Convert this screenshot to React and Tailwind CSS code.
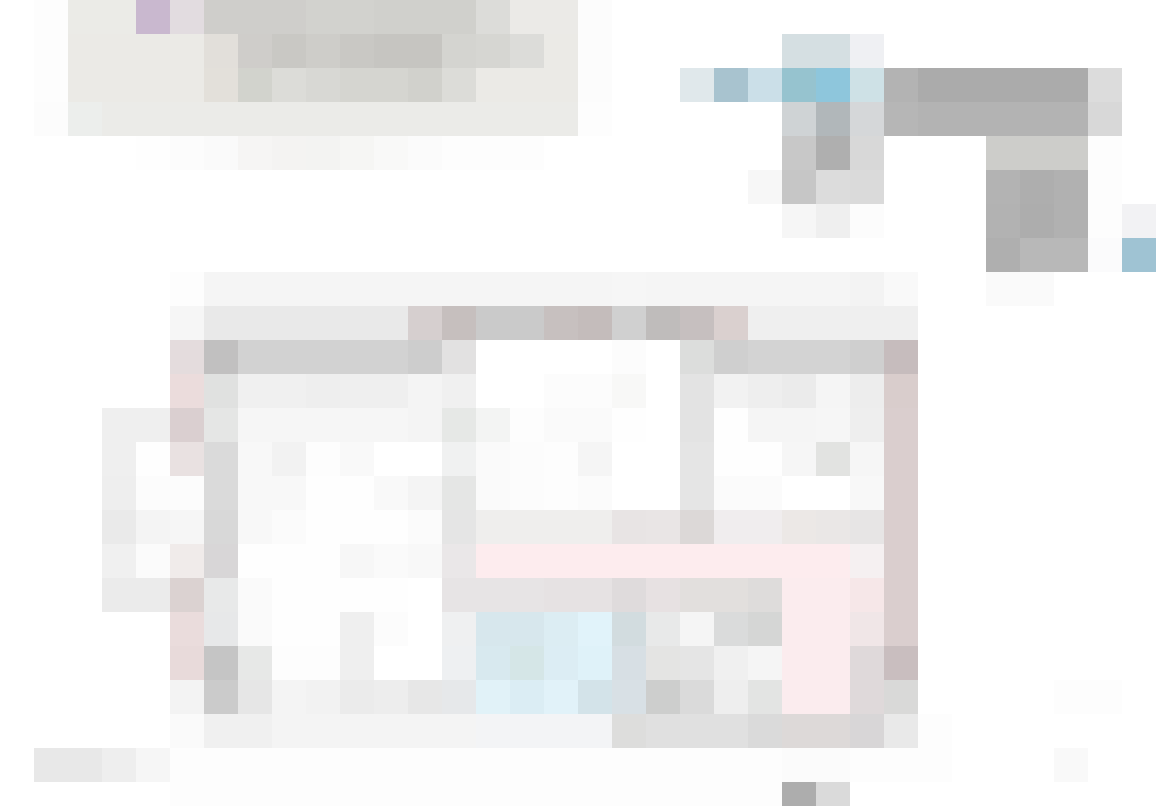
import React from 'react';

const CELL = 34;

// One entry per mosaic row, each run is [column, span, color]
const rows = [
  [[1, 1, '#fdfdfd'], [2, 2, '#ebebe7'], [4, 1, '#c9b8cf'], [5, 1, '#e2dce0'], [6, 3, '#cfcecb'], [9, 2, '#d2d2ce'], [11, 3, '#d0d0cc'], [14, 1, '#dcdcd9'], [15, 2, '#ebeae7'], [17, 1, '#fcfcfc']],
  [[1, 1, '#fdfdfd'], [2, 4, '#ebeae6'], [6, 1, '#e2dfda'], [7, 1, '#cfcdca'], [8, 1, '#c9c8c4'], [9, 1, '#cecdc9'], [10, 1, '#c9c8c4'], [11, 2, '#c6c5c1'], [13, 1, '#d4d4d0'], [14, 1, '#d6d6d2'], [15, 1, '#dcdcd9'], [16, 1, '#ebeae6'], [17, 1, '#fcfcfc'], [23, 2, '#d5dfe2'], [25, 1, '#eff0f3']],
  [[1, 1, '#fdfdfd'], [2, 4, '#ebeae6'], [6, 1, '#e3e0da'], [7, 1, '#d2d3cd'], [8, 1, '#dcdcd8'], [9, 1, '#d8d8d4'], [10, 2, '#d5d5d0'], [12, 1, '#d1d1cc'], [13, 1, '#dcdcd8'], [14, 3, '#ebeae6'], [17, 1, '#fcfcfc'], [20, 1, '#e0e8eb'], [21, 1, '#a8c3cf'], [22, 1, '#cbdfe8'], [23, 1, '#96c3cf'], [24, 1, '#8ec6dc'], [25, 1, '#cee1e6'], [26, 1, '#b3b3b3'], [27, 5, '#ababab'], [32, 1, '#dcdcdc']],
  [[1, 1, '#fcfcfc'], [2, 1, '#eceeec'], [3, 14, '#ebebe8'], [17, 1, '#fdfdfd'], [23, 1, '#cfd3d5'], [24, 1, '#b1b7ba'], [25, 1, '#d5d7d9'], [26, 1, '#b6b6b6'], [27, 5, '#b3b3b3'], [32, 1, '#d8d8d8']],
  [[4, 1, '#fefefe'], [5, 1, '#fcfcfc'], [6, 1, '#fafafa'], [7, 1, '#f6f5f4'], [8, 1, '#f4f3f2'], [9, 1, '#f3f3f2'], [10, 1, '#f6f6f4'], [11, 1, '#f9f9f8'], [12, 1, '#fbfbfb'], [13, 3, '#fdfdfd'], [23, 1, '#c8c8c8'], [24, 1, '#afafaf'], [25, 1, '#d8d8d8'], [29, 3, '#cdcdca'], [32, 1, '#fdfdfd']],
  [[22, 1, '#f7f7f7'], [23, 1, '#c6c6c6'], [24, 1, '#dcdcdc'], [25, 1, '#dadada'], [29, 1, '#b3b3b3'], [30, 1, '#aeaeae'], [31, 1, '#b1b1b1'], [32, 1, '#fdfdfd']],
  [[23, 1, '#f6f6f6'], [24, 1, '#efefef'], [25, 1, '#fcfcfc'], [29, 1, '#b2b2b2'], [30, 1, '#adadad'], [31, 1, '#b1b1b1'], [32, 1, '#fdfdfd'], [33, 1, '#f2f2f4']],
  [[29, 1, '#afafaf'], [30, 2, '#b8b8b8'], [32, 1, '#fbfbfc'], [33, 1, '#9fc3d3']],
  [[5, 1, '#fdfdfd'], [6, 12, '#f5f5f5'], [18, 1, '#f6f6f6'], [19, 6, '#f5f5f5'], [25, 1, '#f3f3f3'], [26, 1, '#f9f9f9'], [29, 2, '#fafafa']],
  [[5, 1, '#f6f6f6'], [6, 6, '#e9e9e9'], [12, 1, '#d6cfcf'], [13, 1, '#c6bfbe'], [14, 2, '#cacaca'], [16, 1, '#c7c0bf'], [17, 1, '#c4bcbb'], [18, 1, '#d0d0d0'], [19, 1, '#bfbcbb'], [20, 1, '#c6bfbf'], [21, 1, '#dad0cf'], [22, 5, '#efefef']],
  [[5, 1, '#e4dcdd'], [6, 1, '#c1c0c0'], [7, 5, '#d2d2d2'], [12, 1, '#cdcdcd'], [13, 1, '#e2e1e1'], [18, 1, '#fcfcfc'], [20, 1, '#dcdddc'], [21, 1, '#cfcfcf'], [22, 3, '#d3d3d3'], [25, 1, '#cfcfcf'], [26, 1, '#c6bcbd']],
  [[5, 1, '#ebdcdc'], [6, 1, '#e0e1e0'], [7, 2, '#f0f0f0'], [9, 1, '#eeeeee'], [10, 2, '#efefef'], [12, 1, '#f4f4f4'], [13, 1, '#f0f0f0'], [16, 2, '#fcfcfc'], [18, 1, '#f8f8f7'], [20, 1, '#e3e3e3'], [21, 1, '#f2f2f2'], [22, 1, '#eeeeee'], [23, 1, '#ebebeb'], [24, 1, '#f5f5f5'], [25, 1, '#ededed'], [26, 1, '#d9cdcc']],
  [[3, 2, '#efefef'], [5, 1, '#dacfd0'], [6, 1, '#e5e6e5'], [7, 5, '#f6f6f6'], [12, 1, '#f4f4f4'], [13, 1, '#e6e8e6'], [14, 1, '#f3f4f3'], [15, 1, '#fdfdfd'], [16, 2, '#fafafa'], [18, 1, '#fefefe'], [20, 1, '#e3e3e3'], [21, 1, '#fefefe'], [22, 2, '#f5f5f5'], [24, 1, '#f6f6f6'], [25, 1, '#eeeeee'], [26, 1, '#dacece']],
  [[3, 1, '#efefef'], [4, 1, '#fefefe'], [5, 1, '#e9e1e1'], [6, 1, '#dadada'], [7, 1, '#f8f8f8'], [8, 1, '#f2f2f2'], [9, 1, '#fdfdfd'], [10, 1, '#f9f9f9'], [13, 1, '#f0f1f1'], [14, 1, '#fafafa'], [15, 1, '#fcfcfc'], [16, 1, '#fdfdfd'], [17, 1, '#f5f5f5'], [20, 1, '#e5e5e5'], [21, 2, '#fefefe'], [23, 1, '#f6f6f6'], [24, 1, '#e2e3e1'], [25, 1, '#f6f6f6'], [26, 1, '#dacece']],
  [[3, 1, '#eeeeee'], [4, 2, '#fcfcfc'], [6, 1, '#dadada'], [7, 2, '#f8f8f8'], [9, 2, '#fefefe'], [11, 1, '#f9f9f9'], [12, 1, '#f4f4f4'], [13, 1, '#e5e6e5'], [14, 1, '#fafafa'], [15, 1, '#fcfcfc'], [16, 1, '#fdfdfd'], [17, 1, '#fbfbfb'], [20, 1, '#e5e5e5'], [21, 2, '#fbfbfb'], [25, 1, '#f8f8f8'], [26, 1, '#dacece']],
  [[3, 1, '#eaeaea'], [4, 1, '#f4f4f4'], [5, 1, '#f6f6f6'], [6, 1, '#d8d8d8'], [7, 1, '#f8f8f8'], [8, 1, '#fbfbfb'], [9, 3, '#fefefe'], [12, 1, '#fbfbfb'], [13, 1, '#e5e5e5'], [14, 4, '#efeeed'], [18, 1, '#e8e4e4'], [19, 1, '#e9e5e5'], [20, 1, '#dcd8d7'], [21, 2, '#f0edee'], [23, 1, '#ece8e6'], [24, 1, '#eae7e6'], [25, 1, '#e7e5e5'], [26, 1, '#dacece']],
  [[3, 1, '#f0f0f0'], [4, 1, '#fbfbfb'], [5, 1, '#f0ebea'], [6, 1, '#d8d6d7'], [7, 3, '#fefefe'], [10, 1, '#f7f7f7'], [11, 1, '#fafafa'], [12, 1, '#f8f8f8'], [13, 1, '#eae7e8'], [14, 11, '#fdecee'], [25, 1, '#f5f0f1'], [26, 1, '#dacece']],
  [[3, 2, '#ebebeb'], [5, 1, '#dbd2d1'], [6, 1, '#e8e9e9'], [7, 1, '#fafafa'], [8, 4, '#fefefe'], [13, 3, '#e7e4e5'], [16, 2, '#e6e2e3'], [18, 1, '#dfdbdc'], [19, 1, '#e7e1e2'], [20, 2, '#e2dfdd'], [22, 1, '#dedcdb'], [23, 2, '#fbecee'], [25, 1, '#f6e7e8'], [26, 1, '#dacece']],
  [[5, 1, '#eadcdc'], [6, 1, '#e7e8e9'], [7, 1, '#fafafa'], [8, 2, '#fefefe'], [10, 1, '#efefef'], [11, 1, '#fcfcfc'], [13, 1, '#eff0f1'], [14, 2, '#d7e7ed'], [16, 1, '#dcedf3'], [17, 1, '#e1f3fa'], [18, 1, '#d2dcdf'], [19, 1, '#e8e9e9'], [20, 1, '#f5f5f5'], [21, 1, '#dadbdb'], [22, 1, '#d5d6d5'], [23, 2, '#fbecee'], [25, 1, '#f0e6e7'], [26, 1, '#dacece']],
  [[5, 1, '#e8dada'], [6, 1, '#c5c5c5'], [7, 1, '#e7e8e7'], [8, 2, '#fdfdfd'], [10, 1, '#efefef'], [13, 1, '#eef0f2'], [14, 1, '#d8e9ef'], [15, 1, '#d5e6e7'], [16, 1, '#dcedf4'], [17, 1, '#dff2f9'], [18, 1, '#d7dfe4'], [19, 1, '#e4e4e3'], [20, 1, '#e5e5e5'], [21, 1, '#f0f0f0'], [22, 1, '#f5f5f5'], [23, 2, '#fbecee'], [25, 1, '#dfd9da'], [26, 1, '#c9bebf']],
  [[5, 1, '#f3f3f3'], [6, 1, '#cbcbcb'], [7, 1, '#e6e6e6'], [8, 1, '#f4f4f4'], [9, 1, '#f2f2f2'], [10, 1, '#ebebeb'], [11, 1, '#ededed'], [12, 1, '#e7e7e7'], [13, 1, '#e6e8ea'], [14, 1, '#e1f2f8'], [15, 1, '#dbedf4'], [16, 1, '#e1f2f9'], [17, 1, '#d3e3e9'], [18, 1, '#d8e0e5'], [19, 1, '#cdcecd'], [20, 1, '#dadada'], [21, 1, '#eeeeee'], [22, 1, '#e3e4e3'], [23, 2, '#fbecee'], [25, 1, '#dfd9da'], [26, 1, '#d9d9d8'], [31, 2, '#fdfdfd']],
  [[5, 1, '#fafafa'], [6, 2, '#f0f0f0'], [8, 6, '#f4f4f4'], [14, 4, '#f3f4f6'], [18, 1, '#dddddc'], [19, 3, '#e0e0e0'], [22, 1, '#dadada'], [23, 2, '#ddd9d8'], [25, 1, '#d8d6d7'], [26, 1, '#e9e9e9'], [27, 1, '#fdfdfd']],
  [[1, 2, '#e8e8e8'], [3, 1, '#eeeeee'], [4, 1, '#f6f6f6'], [5, 18, '#fdfdfd'], [23, 2, '#fbfbfb'], [25, 3, '#fdfdfd'], [31, 1, '#f9f9f9']],
  [[5, 18, '#fdfdfd'], [23, 1, '#adadad'], [24, 1, '#dadada']]
];

const Mosaic = () => (
  <svg
    viewBox="0 0 1162 806"
    className="block w-full"
    shapeRendering="crispEdges"
    role="img"
    aria-label="Pixelated floor plan"
  >
    {rows.map((runs, row) =>
      runs.map(([col, span, color]) => (
        <rect
          key={`${row}-${col}`}
          x={col * CELL}
          y={row * CELL}
          width={span * CELL}
          height={CELL}
          fill={color}
        />
      ))
    )}
  </svg>
);

const App = () => {
  return (
    <main className="min-h-screen overflow-hidden bg-white">
      <Mosaic />
    </main>
  );
};

export default App;
